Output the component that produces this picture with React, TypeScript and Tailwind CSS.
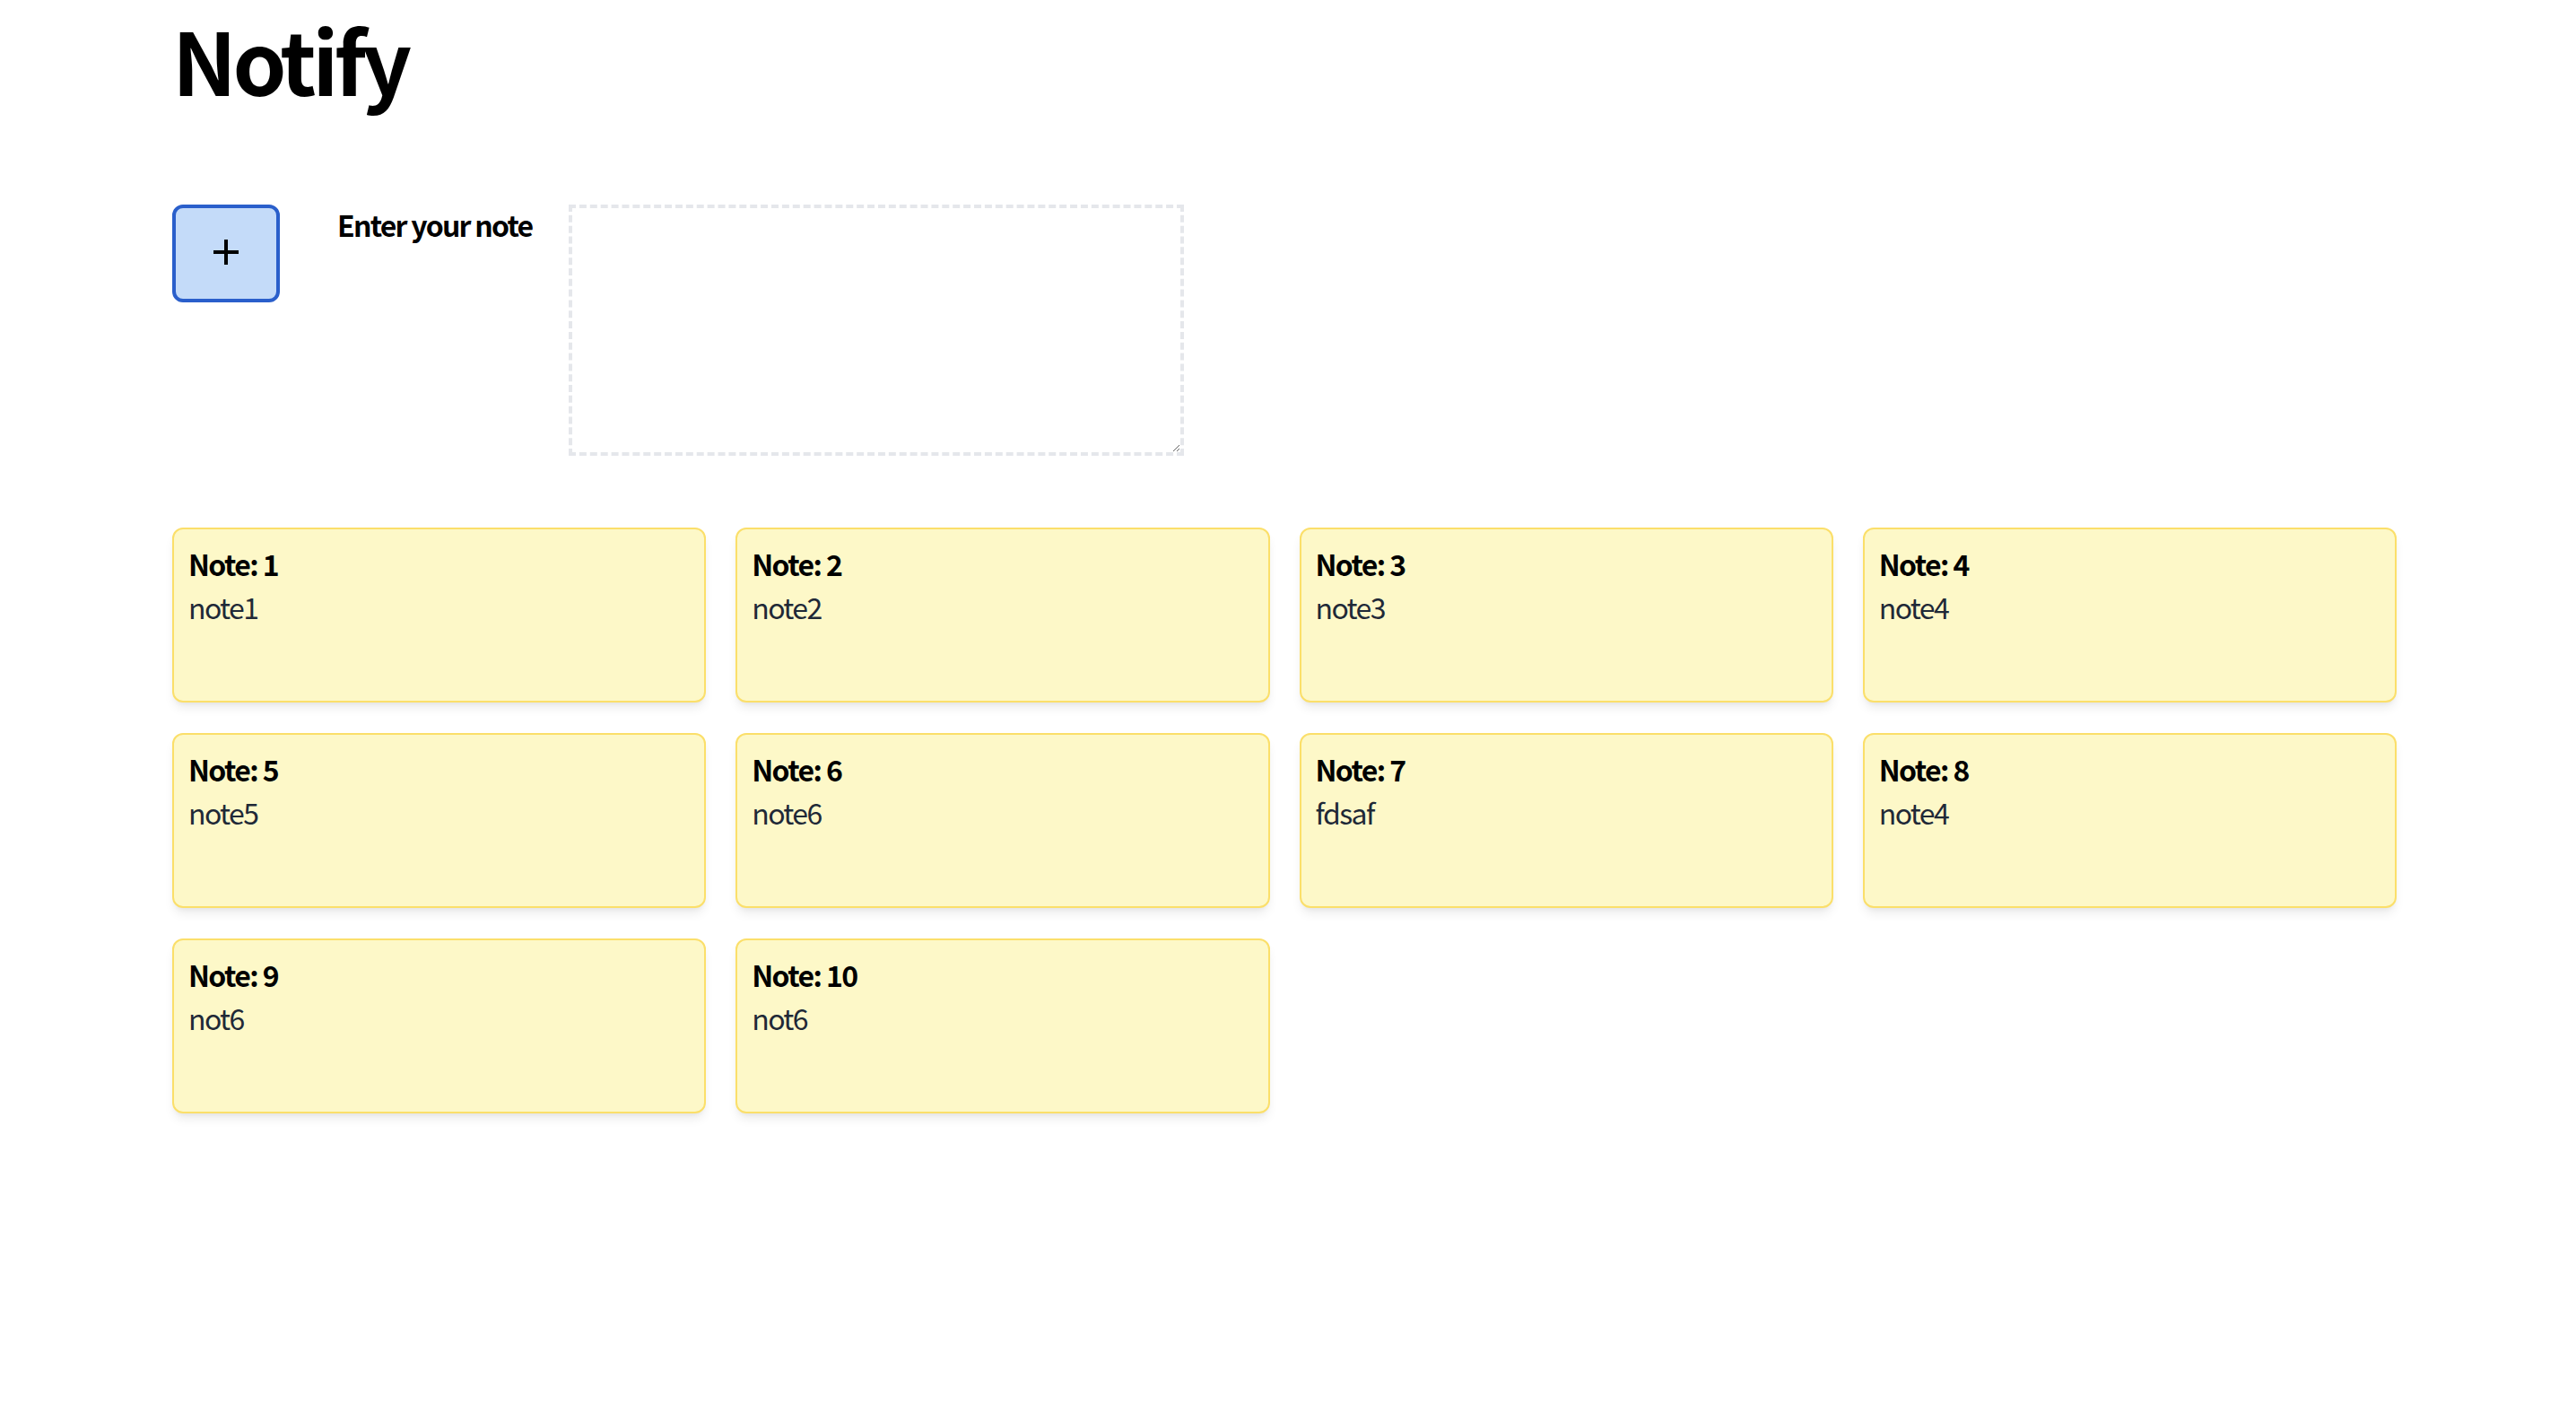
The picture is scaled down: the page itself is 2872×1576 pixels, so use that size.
import { useState } from "react";

const notes = [
  { id: 1, text: "note1" },
  { id: 2, text: "note2" },
  { id: 3, text: "note3" },
  { id: 4, text: "note4" },
  { id: 5, text: "note5" },
  { id: 6, text: "note6" },
  { id: 7, text: "fdsaf" },
  { id: 8, text: "note4" },
  { id: 9, text: "not6" },
  { id: 10, text: "not6" },
];

export default function App() {
  const [draft, setDraft] = useState("");

  return (
    <div className="min-h-screen bg-white font-['Noto_Sans_CJK_JP','Noto_Sans',sans-serif] text-black">
      <div className="w-[2480px] pl-[192px] pt-[18px] box-content">
        <h1 className="text-[96px] leading-none font-bold tracking-[-0.047em]">Notify</h1>

        {/* 入力エリア */}
        <div className="mt-[114px] flex items-start">
          <button
            type="button"
            className="flex h-[109px] w-[120px] items-center justify-center rounded-[12px] border-4 border-[#2a5fcb] bg-[#c4dbf9]"
          >
            <svg width="30" height="30" viewBox="0 0 30 30" className="-mt-[4px]">
              <path d="M15 1v28M1 15h28" stroke="#000" strokeWidth="4" />
            </svg>
          </button>
          <label className="ml-[64px] -mt-[2px] w-[258px] text-[32px] leading-[48px] font-bold tracking-[-0.055em]">
            Enter your note
          </label>
          <textarea
            value={draft}
            onChange={(e) => setDraft(e.target.value)}
            className="h-[280px] w-[686px] border-4 border-dashed border-[#e5e7eb] bg-white p-2 outline-none"
          />
        </div>

        {/* ノート一覧 */}
        <div className="mt-[80px] grid grid-cols-4 gap-x-[33px] gap-y-[34px]">
          {notes.map((n) => (
            <div
              key={n.id}
              className="h-[195px] rounded-[12px] border-2 border-[#fbdf6a] bg-[#fdf8c8] px-[16px] pt-[14px] shadow-[0_8px_12px_-2px_rgba(0,0,0,0.08),0_4px_6px_-4px_rgba(0,0,0,0.08)]"
            >
              <p className="text-[32px] leading-[48px] font-bold tracking-[-0.05em]">Note: {n.id}</p>
              <p className="text-[32px] leading-[48px] tracking-[-0.05em] text-[#1f2937]">{n.text}</p>
            </div>
          ))}
        </div>
      </div>
    </div>
  );
}
